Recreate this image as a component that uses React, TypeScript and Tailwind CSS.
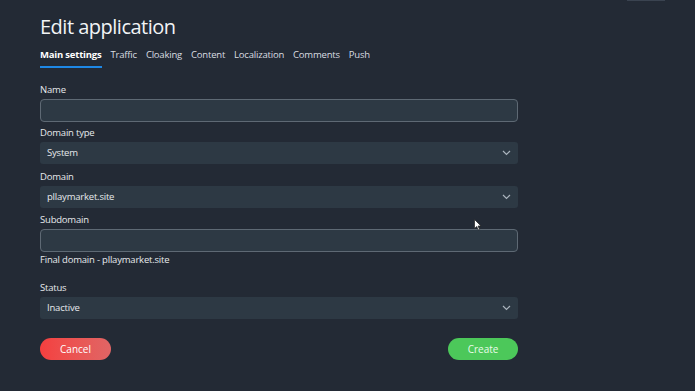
import React from "react";

const Chevron = () => (
  <svg width="9" height="6" viewBox="0 0 9 6" className="shrink-0">
    <path d="M1 1l3.5 3.5L8 1" fill="none" stroke="#aab4bd" strokeWidth="1.2" />
  </svg>
);

const Select = ({ value }: { value: string }) => (
  <div className="flex h-[22px] items-center justify-between rounded-[3px] bg-[#2d3944] pl-[7px] pr-[7px] text-[9.5px] tracking-[-0.2px] text-[#e6e9ec]">
    <span>{value}</span>
    <Chevron />
  </div>
);

const Input = () => (
  <div className="h-[23px] rounded-[4px] border border-[#5e6974] bg-[#2d3944]" />
);

const Label = ({ children }: { children: React.ReactNode }) => (
  <div className="text-[9.5px] leading-[12px] tracking-[-0.2px] text-[#e6e9ec]">{children}</div>
);

export default function App() {
  return (
    <div
      className="relative h-[391px] w-[695px] overflow-hidden bg-[#232a35]"
      style={{ fontFamily: '"Open Sans", "Noto Sans", sans-serif' }}
    >
      <div className="absolute right-[30px] top-0 h-px w-[38px] bg-[#3a4350]" />
      <div className="flex w-[518px] flex-col pl-[40px] pt-[12px]">
        <h1 className="text-[20px] leading-[30px] font-normal tracking-[-0.5px] text-[#f2f4f6]">Edit application</h1>
        <div className="mt-[6px] flex gap-[9px] text-[9.5px] leading-[14px] tracking-[-0.2px] text-[#d9dde1]">
          <div className="flex flex-col">
            <span className="font-bold text-white">Main settings</span>
            <div className="mt-[4px] h-[2px] bg-[#1e88e5]" />
          </div>
          <span>Traffic</span>
          <span>Cloaking</span>
          <span>Content</span>
          <span>Localization</span>
          <span>Comments</span>
          <span>Push</span>
        </div>
        <div className="mt-[16px]">
          <Label>Name</Label>
        </div>
        <div className="mt-[3px]">
          <Input />
        </div>
        <div className="mt-[5px]">
          <Label>Domain type</Label>
        </div>
        <div className="mt-[3px]">
          <Select value="System" />
        </div>
        <div className="mt-[7px]">
          <Label>Domain</Label>
        </div>
        <div className="mt-[3px]">
          <Select value="pllaymarket.site" />
        </div>
        <div className="mt-[6px]">
          <Label>Subdomain</Label>
        </div>
        <div className="mt-[3px]">
          <Input />
        </div>
        <div className="mt-[2px]">
          <Label>Final domain - pllaymarket.site</Label>
        </div>
        <div className="mt-[16px]">
          <Label>Status</Label>
        </div>
        <div className="mt-[3px]">
          <Select value="Inactive" />
        </div>
        <div className="mt-[19px] flex justify-between">
          <button className="h-[22px] w-[71px] rounded-full bg-gradient-to-r from-[#f43f3f] to-[#e06565] text-[10px] text-white">
            Cancel
          </button>
          <button className="h-[22px] w-[70px] rounded-full bg-[#4cc85a] text-[10px] text-[#eafbe9]">
            Create
          </button>
        </div>
      </div>
      <svg className="absolute left-[474px] top-[219px]" width="8" height="12" viewBox="0 0 8 12">
        <path d="M0.5 0.5v9l2.2-2 1.6 3.5 1.3-.6-1.6-3.4h3z" fill="#fff" stroke="#222" strokeWidth="0.7" />
      </svg>
    </div>
  );
}
